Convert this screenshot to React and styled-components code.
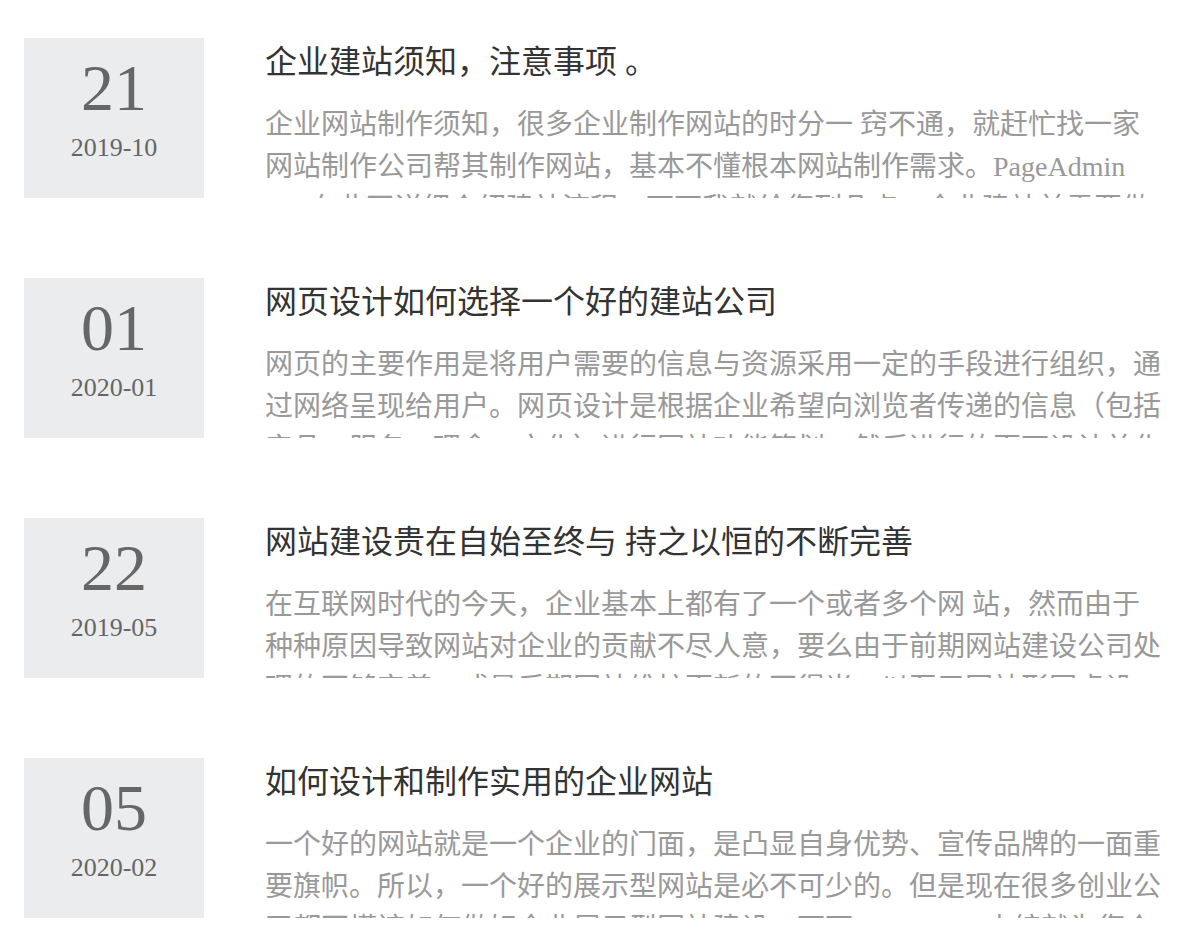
import React from "react";
import styled, { createGlobalStyle } from "styled-components";

const GlobalStyle = createGlobalStyle`
  html, body {
    margin: 0;
    padding: 0;
    background: #ffffff;
  }
  body {
    font-family: "Liberation Serif", "Noto Sans CJK SC", serif;
  }
`;

const NewsList = styled.ul`
  list-style: none;
  margin: 0;
  padding: 38px 0 0 24px;
  display: flex;
  flex-direction: column;
  gap: 80px;
`;

const NewsItem = styled.li`
  display: grid;
  grid-template-columns: 180px 898px;
  column-gap: 61px;
  height: 160px;
`;

const DateBox = styled.div`
  background: #ebeced;
  height: 160px;
  display: flex;
  flex-direction: column;
  align-items: center;
  padding-top: 17px;
  box-sizing: border-box;
  color: #666666;
  font-family: "Liberation Serif", serif;
`;

const Day = styled.span`
  font-size: 66px;
  line-height: 66px;
`;

const YearMonth = styled.span`
  margin-top: 14px;
  font-size: 26px;
  line-height: 26px;
`;

const Body = styled.div`
  height: 160px;
  overflow: hidden;
`;

const Title = styled.h3`
  margin: 0;
  font-weight: normal;
  font-size: 32px;
  line-height: 48px;
  color: #333333;
  white-space: nowrap;
`;

const Summary = styled.p`
  margin: 18px 0 0;
  font-size: 28px;
  line-height: 42px;
  color: #999999;
`;

const news = [
  {
    day: "21",
    ym: "2019-10",
    title: "企业建站须知，注意事项 。",
    summary:
      "企业网站制作须知，很多企业制作网站的时分一 窍不通，就赶忙找一家网站制作公司帮其制作网站，基本不懂根本网站制作需求。PageAdmin cms在此不详细介绍建站流程，下面我就给您列几点，企业建站前需要做的准备工作。",
  },
  {
    day: "01",
    ym: "2020-01",
    title: "网页设计如何选择一个好的建站公司",
    summary:
      "网页的主要作用是将用户需要的信息与资源采用一定的手段进行组织，通过网络呈现给用户。网页设计是根据企业希望向浏览者传递的信息（包括产品、服务、理念、文化）进行网站功能策划，然后进行的页面设计美化工作。",
  },
  {
    day: "22",
    ym: "2019-05",
    title: "网站建设贵在自始至终与 持之以恒的不断完善",
    summary:
      "在互联网时代的今天，企业基本上都有了一个或者多个网 站，然而由于种种原因导致网站对企业的贡献不尽人意，要么由于前期网站建设公司处理的不够完善，或是后期网站维护更新的不得当，以至于网站形同虚设。",
  },
  {
    day: "05",
    ym: "2020-02",
    title: "如何设计和制作实用的企业网站",
    summary:
      "一个好的网站就是一个企业的门面，是凸显自身优势、宣传品牌的一面重要旗帜。所以，一个好的展示型网站是必不可少的。但是现在很多创业公司都不懂该如何做好企业展示型网站建设，下面PageAdmin小编就为您介绍。",
  },
];

export default function App() {
  return (
    <>
      <GlobalStyle />
      <NewsList>
        {news.map((item) => (
          <NewsItem key={item.title}>
            <DateBox>
              <Day>{item.day}</Day>
              <YearMonth>{item.ym}</YearMonth>
            </DateBox>
            <Body>
              <Title>{item.title}</Title>
              <Summary>{item.summary}</Summary>
            </Body>
          </NewsItem>
        ))}
      </NewsList>
    </>
  );
}
